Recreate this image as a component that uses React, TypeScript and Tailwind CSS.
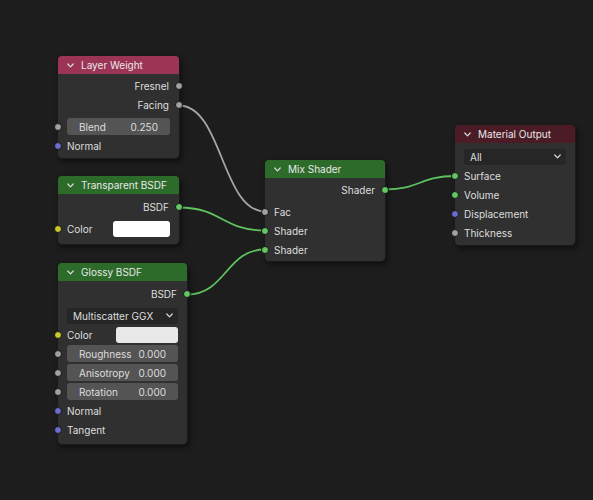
import React from 'react';

type SocketType = 'grey' | 'green' | 'purple' | 'yellow';

const socketColor: Record<SocketType, string> = {
  grey: 'bg-[#a1a1a1]',
  green: 'bg-[#63c763]',
  purple: 'bg-[#6c6cd0]',
  yellow: 'bg-[#c9c92e]',
};

const links = [
  { from: [179, 105.5], to: [265, 211.5], color: '#a6a6a6' },
  { from: [179, 207.5], to: [265, 230.5], color: '#5fc25f' },
  { from: [187, 294.5], to: [265, 249.5], color: '#5fc25f' },
  { from: [385, 189.5], to: [455, 176], color: '#5fc25f' },
];

function wirePath(from: number[], to: number[]) {
  const d = Math.abs(to[0] - from[0]) * 0.5;
  return `M${from[0]} ${from[1]} C${from[0] + d} ${from[1]} ${to[0] - d} ${to[1]} ${to[0]} ${to[1]}`;
}

function Socket({ type, side }: { type: SocketType; side: 'left' | 'right' }) {
  return (
    <span
      className={`absolute top-1/2 -translate-y-1/2 w-[8px] h-[8px] rounded-full border border-[#151515] ${
        side === 'left' ? 'left-[-4px]' : 'right-[-4px]'
      } ${socketColor[type]}`}
    />
  );
}

function Chevron({ className }: { className?: string }) {
  return (
    <svg width="7" height="5" viewBox="0 0 7 5" className={className}>
      <path d="M0.8 1 L3.5 3.8 L6.2 1" fill="none" stroke="#dcdcdc" strokeWidth="1.2" strokeLinecap="round" strokeLinejoin="round" />
    </svg>
  );
}

function Output({ label, type }: { label: string; type: SocketType }) {
  return (
    <div className="relative h-[19px] flex items-center justify-end pr-[10px]">
      <span>{label}</span>
      <Socket type={type} side="right" />
    </div>
  );
}

function Input({ label, type }: { label: string; type: SocketType }) {
  return (
    <div className="relative h-[19px] flex items-center pl-[9px]">
      <span>{label}</span>
      <Socket type={type} side="left" />
    </div>
  );
}

function Field({ label, value, type }: { label: string; value: string; type: SocketType }) {
  return (
    <div className="relative h-[19px] flex items-center pl-[9px] pr-[9px]">
      <div className="flex-1 h-[17px] rounded-[3px] bg-[#545454] flex items-center justify-between px-[12px]">
        <span>{label}</span>
        <span>{value}</span>
      </div>
      <Socket type={type} side="left" />
    </div>
  );
}

function ColorInput({ swatch }: { swatch: string }) {
  return (
    <div className="relative h-[19px] flex items-center pl-[9px] pr-[9px]">
      <span>Color</span>
      <div className={`ml-auto h-[16px] rounded-[3px] ${swatch}`} />
      <Socket type="yellow" side="left" />
    </div>
  );
}

function Dropdown({ label }: { label: string }) {
  return (
    <div className="h-[19px] flex items-center pl-[9px] pr-[9px]">
      <div className="flex-1 h-[16px] rounded-[3px] bg-[#262626] flex items-center justify-between pl-[6px] pr-[5px]">
        <span>{label}</span>
        <Chevron />
      </div>
    </div>
  );
}

function Node({
  pos,
  title,
  header,
  body,
  children,
}: {
  pos: string;
  title: string;
  header: string;
  body: string;
  children: React.ReactNode;
}) {
  return (
    <div className={`absolute ${pos} rounded-[5px] bg-[#303030] border border-[#1a1a1a] shadow-[2px_3px_5px_rgba(0,0,0,0.45)]`}>
      <div className={`h-[18px] rounded-t-[4px] flex items-center pl-[9px] gap-[7px] ${header}`}>
        <Chevron />
        <span className="text-[#e8e8e8]">{title}</span>
      </div>
      <div className={body}>{children}</div>
    </div>
  );
}

export default function App() {
  return (
    <div className="relative w-[593px] h-[500px] overflow-hidden bg-[#1d1d1d] font-['Inter',sans-serif] text-[10px] text-[#dedede] leading-none">
      {/* Wires */}
      <svg className="absolute inset-0" width="593" height="500">
        {links.map((l, i) => (
          <path key={i} d={wirePath(l.from, l.to)} fill="none" stroke={l.color} strokeWidth="1.8" />
        ))}
      </svg>

      {/* Layer Weight */}
      <Node pos="left-[57px] top-[55px] w-[123px]" title="Layer Weight" header="bg-[#9c3456]" body="pt-[2px] pb-[3px]">
        <Output label="Fresnel" type="grey" />
        <Output label="Facing" type="grey" />
        <div className="h-[3px]" />
        <Field label="Blend" value="0.250" type="grey" />
        <Input label="Normal" type="purple" />
      </Node>

      {/* Transparent BSDF */}
      <Node pos="left-[57px] top-[175px] w-[123px]" title="Transparent BSDF" header="bg-[#2d6b2b]" body="pt-[3px] pb-[6px]">
        <Output label="BSDF" type="green" />
        <div className="h-[3px]" />
        <ColorInput swatch="w-[57px] bg-white" />
      </Node>

      {/* Glossy BSDF */}
      <Node pos="left-[57px] top-[262px] w-[131px]" title="Glossy BSDF" header="bg-[#2d6b2b]" body="pt-[3px] pb-[5px]">
        <Output label="BSDF" type="green" />
        <div className="h-[3px]" />
        <Dropdown label="Multiscatter GGX" />
        <ColorInput swatch="w-[62px] bg-[#e9e9e9]" />
        <Field label="Roughness" value="0.000" type="grey" />
        <Field label="Anisotropy" value="0.000" type="grey" />
        <Field label="Rotation" value="0.000" type="grey" />
        <Input label="Normal" type="purple" />
        <Input label="Tangent" type="purple" />
      </Node>

      {/* Mix Shader */}
      <Node pos="left-[264px] top-[159px] w-[122px]" title="Mix Shader" header="bg-[#2d6b2b]" body="pt-[2px] pb-[2px]">
        <Output label="Shader" type="green" />
        <div className="h-[3px]" />
        <Input label="Fac" type="grey" />
        <Input label="Shader" type="green" />
        <Input label="Shader" type="green" />
      </Node>

      {/* Material Output */}
      <Node pos="left-[454px] top-[124px] w-[122px]" title="Material Output" header="bg-[#4b1b26]" body="pt-[4px] pb-[3px]">
        <Dropdown label="All" />
        <Input label="Surface" type="green" />
        <Input label="Volume" type="green" />
        <Input label="Displacement" type="purple" />
        <Input label="Thickness" type="grey" />
      </Node>
    </div>
  );
}
